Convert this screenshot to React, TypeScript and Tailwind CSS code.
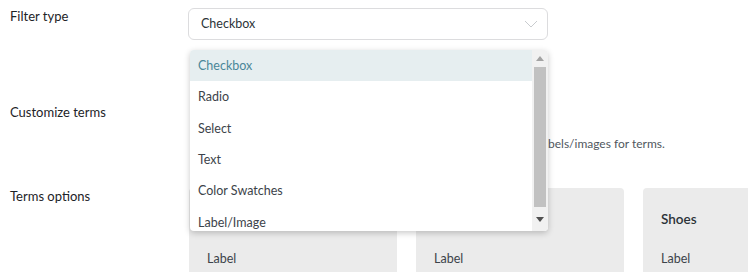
import React from "react";

const options = ["Checkbox", "Radio", "Select", "Text", "Color Swatches", "Label/Image"];

function Card({ title }: { title?: string }) {
  return (
    <div className="w-[208px] h-[120px] shrink-0 rounded-[4px] bg-[#ebebeb] pl-[18px] pt-[21px]">
      <div className="h-[20px] text-[13.5px] leading-[20px] font-semibold text-[#2c3338]">{title ?? ""}</div>
      <div className="mt-[21px] text-[12.5px] leading-[18px] text-[#3c434a]">Label</div>
    </div>
  );
}

export default function App() {
  return (
    <div
      className="relative w-[748px] h-[272px] overflow-hidden bg-white pl-[10px]"
      style={{ fontFamily: 'Lato, "Noto Sans", sans-serif' }}
    >
      {/* Row 1 */}
      <div className="flex items-start">
        <div className="w-[178px] shrink-0 pt-[7px] text-[13px] leading-[18px] text-[#1d2327]">Filter type</div>
        <div className="mt-[8px] flex h-[32px] w-[360px] items-center justify-between rounded-[6px] border border-[#dcdcde] pl-[12px] pr-[8px] text-[12.5px] text-[#2c3338]">
          <span>Checkbox</span>
          <svg width="14" height="8" viewBox="0 0 14 8" className="mr-[1px]">
            <path d="M1 1 L7 7 L13 1" fill="none" stroke="#c9cccf" strokeWidth="1" />
          </svg>
        </div>
      </div>

      {/* Row 2 */}
      <div className="mt-[63px] flex items-start">
        <div className="w-[178px] shrink-0 text-[13px] leading-[18px] text-[#1d2327]">Customize terms</div>
        <div>
          <div className="h-[32px]" />
          <div className="flex pl-[10px] text-[12px] leading-[18px] text-[#50575e] whitespace-nowrap">
            <span className="inline-block w-[350px] overflow-hidden"></span>
            <span>bels/images for terms.</span>
          </div>
        </div>
      </div>

      {/* Row 3 */}
      <div className="mt-[35px] flex items-start">
        <div className="w-[178px] shrink-0 text-[13px] leading-[16px] text-[#1d2327]">Terms options</div>
        <div className="ml-[1px] flex gap-[19px]">
          <Card />
          <Card />
          <Card title="Shoes" />
        </div>
      </div>

      {/* Dropdown overlay */}
      <div className="absolute left-[190px] top-[50px] w-[358px] h-[181px] overflow-hidden rounded-[4px] bg-white shadow-[0_2px_6px_rgba(0,0,0,0.22)] flex">
        <div className="flex-1 overflow-hidden">
          {options.map((o, i) => (
            <div
              key={o}
              className={
                "h-[31.4px] pl-[8px] pt-[1px] flex items-center text-[12.5px] " +
                (i === 0 ? "bg-[#e6eef0] text-[#4a8799]" : "text-[#3c434a]")
              }
            >
              {o}
            </div>
          ))}
        </div>
        <div className="w-[16px] shrink-0 bg-[#f1f1f1] flex flex-col items-center">
          <div className="h-[17px] flex items-center justify-center">
            <svg width="8" height="5" viewBox="0 0 8 5">
              <path d="M0 5 L4 0 L8 5 Z" fill="#a3a3a3" />
            </svg>
          </div>
          <div className="w-[12px] h-[140px] bg-[#c1c1c1]" />
          <div className="flex-1 flex items-center justify-center">
            <svg width="8" height="5" viewBox="0 0 8 5">
              <path d="M0 0 L8 0 L4 5 Z" fill="#505050" />
            </svg>
          </div>
        </div>
      </div>
    </div>
  );
}
